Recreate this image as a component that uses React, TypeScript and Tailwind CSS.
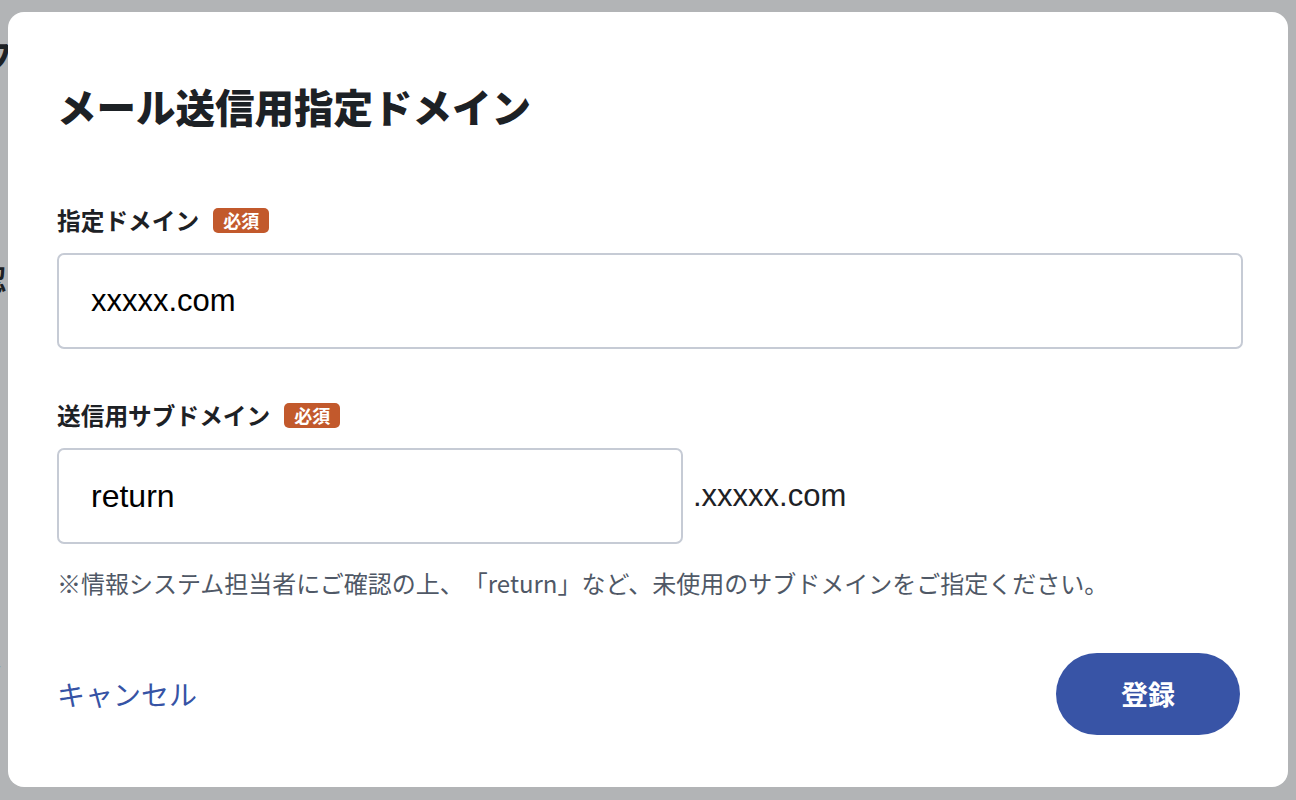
import React from "react";

const jp = { fontFamily: '"Noto Sans CJK JP", "Noto Sans", sans-serif' };
const latin = { fontFamily: '"Liberation Sans", Arial, "Noto Sans CJK JP", sans-serif' };

const Badge = () => (
  <span className="ml-[14px] inline-flex h-[25px] items-center rounded-[5px] bg-[#c2592c] px-[10px] text-[18px] font-bold leading-none text-white">
    必須
  </span>
);

const App = () => {
  return (
    <div className="relative h-[800px] w-[1296px] overflow-hidden bg-[#b2b4b6] [text-spacing-trim:space-all]" style={jp}>
      {/* page behind the overlay */}
      <div className="absolute left-[-22px] top-0 font-bold text-[#1d2125]">
        <span className="absolute top-[28px] text-[36px]">フ</span>
        <span className="absolute top-[128px] text-[20px] font-normal">ァ</span>
        <span className="absolute top-[258px] text-[28px]">認</span>
        <span className="absolute top-[356px] text-[24px] font-normal">イ</span>
        <span className="absolute top-[644px] text-[26px] font-normal">ト</span>
      </div>

      {/* Dialog */}
      <div className="absolute left-[8px] top-[12px] flex h-[775px] w-[1280px] flex-col rounded-[16px] bg-white pl-[49px] pr-[45px] pt-[70px]">
        <h1 className="text-[39.5px] font-black leading-[47px] text-[#1d2125]">メール送信用指定ドメイン</h1>

        <label className="mt-[75px] flex items-center text-[23.7px] font-bold leading-[32px] text-[#1d2125]">
          指定ドメイン
          <Badge />
        </label>
        <div className="mt-[17px] flex h-[96px] items-center rounded-[7px] border-2 border-[#c6cbd5] pl-[32px]">
          <span className="text-[31px] text-black" style={latin}>xxxxx.com</span>
        </div>

        <label className="mt-[50px] flex items-center text-[23.7px] font-bold leading-[32px] text-[#1d2125]">
          送信用サブドメイン
          <Badge />
        </label>
        <div className="mt-[17px] flex items-center">
          <div className="flex h-[96px] w-[626px] items-center rounded-[7px] border-2 border-[#c6cbd5] pl-[32px]">
            <span className="text-[32px] text-black" style={latin}>return</span>
          </div>
          <span className="ml-[10px] text-[31px] text-[#1d2125]" style={latin}>.xxxxx.com</span>
        </div>

        <p className="mt-[23px] text-[24px] leading-[32px] text-[#4f5866]">
          ※情報システム担当者にご確認の上、「return」など、未使用のサブドメインをご指定ください。
        </p>

        <div className="mt-[54px] flex items-center justify-between pr-[3px]">
          <button className="text-[28px] text-[#3653a5]">キャンセル</button>
          <button className="flex h-[82px] w-[184px] items-center justify-center rounded-full bg-[#3854a6] text-[27px] font-bold text-white">
            登録
          </button>
        </div>
      </div>
    </div>
  );
};

export default App;
